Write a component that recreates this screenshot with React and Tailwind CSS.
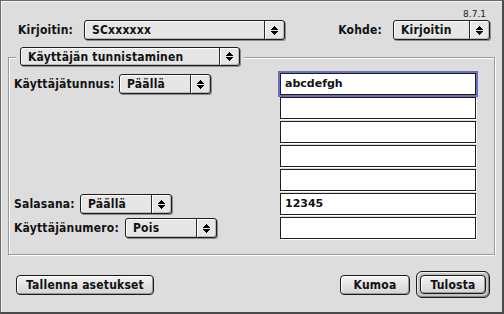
import React from "react";

function Arrows() {
  return (
    <svg width="7" height="9" viewBox="0 0 7 9" shapeRendering="crispEdges">
      <rect x="3" y="0" width="1" height="1" fill="#000" />
      <rect x="2" y="1" width="3" height="1" fill="#000" />
      <rect x="1" y="2" width="5" height="1" fill="#000" />
      <rect x="0" y="3" width="7" height="1" fill="#000" />
      <rect x="0" y="5" width="7" height="1" fill="#000" />
      <rect x="1" y="6" width="5" height="1" fill="#000" />
      <rect x="2" y="7" width="3" height="1" fill="#000" />
      <rect x="3" y="8" width="1" height="1" fill="#000" />
    </svg>
  );
}

function Popup({ className, label }) {
  return (
    <div
      className={
        "flex items-stretch rounded-[3px] border border-[#1e1e1e] bg-[#e6e6e6] shadow-[1px_1px_0_#8c8c8c,inset_1px_1px_0_#ffffff,inset_-1px_-1px_0_#b8b8b8] " +
        className
      }
    >
      <div className="flex flex-1 items-center pl-[7px] text-[12px] font-bold leading-none tracking-[0.2px] text-[#111]">
        {label}
      </div>
      <div className="flex w-[20px] items-center justify-center border-l border-[#2a2a2a] shadow-[inset_1px_0_0_#ffffff]">
        <Arrows />
      </div>
    </div>
  );
}

function Field({ children, focused }) {
  return (
    <div
      className={
        focused
          ? "flex h-[22px] items-center border border-[#1e1e1e] bg-white pl-[4px] font-['DejaVu_Sans',sans-serif] text-[11px] font-bold text-[#111] shadow-[0_0_0_2px_#6b6fc4]"
          : "flex h-[22px] items-center border border-[#1e1e1e] bg-white pl-[4px] font-['DejaVu_Sans',sans-serif] text-[11px] font-bold text-[#111] shadow-[1px_1px_0_#ffffff]"
      }
    >
      {children}
    </div>
  );
}

function Button({ className, children }) {
  return (
    <div
      className={
        "flex items-center justify-center rounded-[4px] border border-[#1a1a1a] bg-gradient-to-b from-[#f4f4f4] to-[#d4d4d4] text-[12px] font-bold leading-none tracking-[0.2px] text-[#111] shadow-[inset_1px_1px_0_#ffffff,inset_-1px_-1px_0_#9a9a9a] " +
        className
      }
    >
      {children}
    </div>
  );
}

export default function App() {
  return (
    <div className="flex h-[314px] w-[504px] flex-col border-l border-t border-r-2 border-b-2 border-l-[#6a6a6a] border-t-[#6a6a6a] border-r-[#4a4a4a] border-b-[#4a4a4a] bg-[#dddddd] font-['DejaVu_Sans_Condensed','DejaVu_Sans',sans-serif] text-[#111] shadow-[inset_1px_1px_0_#f4f4f4]">
      <div className="mt-[7px] flex h-[12px] justify-end pr-[16px] font-['DejaVu_Sans',sans-serif] text-[9px] leading-[12px] text-[#222]">
        8.7.1
      </div>

      <div className="flex h-[20px] items-center pl-[17px] pr-[12px]">
        <div className="w-[66px] text-[12px] font-bold leading-none tracking-[0.2px]">Kirjoitin:</div>
        <Popup className="h-[20px] w-[201px]" label="SCxxxxxx" />
        <div className="ml-auto flex items-center gap-[11px]">
          <div className="text-[12px] font-bold leading-none tracking-[0.2px]">Kohde:</div>
          <Popup className="h-[20px] w-[97px]" label="Kirjoitin" />
        </div>
      </div>

      <div className="ml-[7px] mt-[17px] flex h-[198px] w-[487px] flex-col border border-[#9a9a9a] shadow-[inset_1px_1px_0_#ffffff,1px_1px_0_#ffffff]">
        <div className="ml-[7px] mt-[-11px] flex w-[228px] bg-[#dddddd] px-[4px]">
          <Popup className="h-[19px] w-[220px]" label="Käyttäjän tunnistaminen" />
        </div>

        <div className="mt-[7px] grid grid-cols-[266px_196px] grid-rows-[repeat(7,22px)] gap-y-[2px] pl-[5px]">
          <div className="col-start-1 row-start-1 flex items-center">
            <div className="w-[105px] text-[12px] font-bold leading-none tracking-[0.2px]">Käyttäjätunnus:</div>
            <Popup className="h-[20px] w-[92px]" label="Päällä" />
          </div>
          <div className="col-start-1 row-start-6 flex items-center">
            <div className="w-[66px] text-[12px] font-bold leading-none tracking-[0.2px]">Salasana:</div>
            <Popup className="h-[20px] w-[92px]" label="Päällä" />
          </div>
          <div className="col-start-1 row-start-7 flex items-center">
            <div className="w-[111px] text-[12px] font-bold leading-none tracking-[0.2px]">Käyttäjänumero:</div>
            <Popup className="h-[20px] w-[92px]" label="Pois" />
          </div>

          <div className="col-start-2 row-start-1">
            <Field focused>abcdefgh</Field>
          </div>
          <div className="col-start-2 row-start-2">
            <Field />
          </div>
          <div className="col-start-2 row-start-3">
            <Field />
          </div>
          <div className="col-start-2 row-start-4">
            <Field />
          </div>
          <div className="col-start-2 row-start-5">
            <Field />
          </div>
          <div className="col-start-2 row-start-6">
            <Field>12345</Field>
          </div>
          <div className="col-start-2 row-start-7">
            <Field />
          </div>
        </div>
      </div>

      <div className="mt-[16px] flex h-[27px] items-center pl-[15px] pr-[12px]">
        <Button className="h-[20px] w-[138px]">Tallenna asetukset</Button>
        <div className="ml-auto flex items-center gap-[6px]">
          <Button className="h-[20px] w-[70px]">Kumoa</Button>
          <div className="flex h-[27px] w-[74px] items-center justify-center rounded-[6px] border border-[#1a1a1a] bg-[#c4c4c4] shadow-[inset_1px_1px_0_#f0f0f0,inset_-1px_-1px_0_#888888]">
            <Button className="h-[19px] w-[66px]">Tulosta</Button>
          </div>
        </div>
      </div>
    </div>
  );
}
